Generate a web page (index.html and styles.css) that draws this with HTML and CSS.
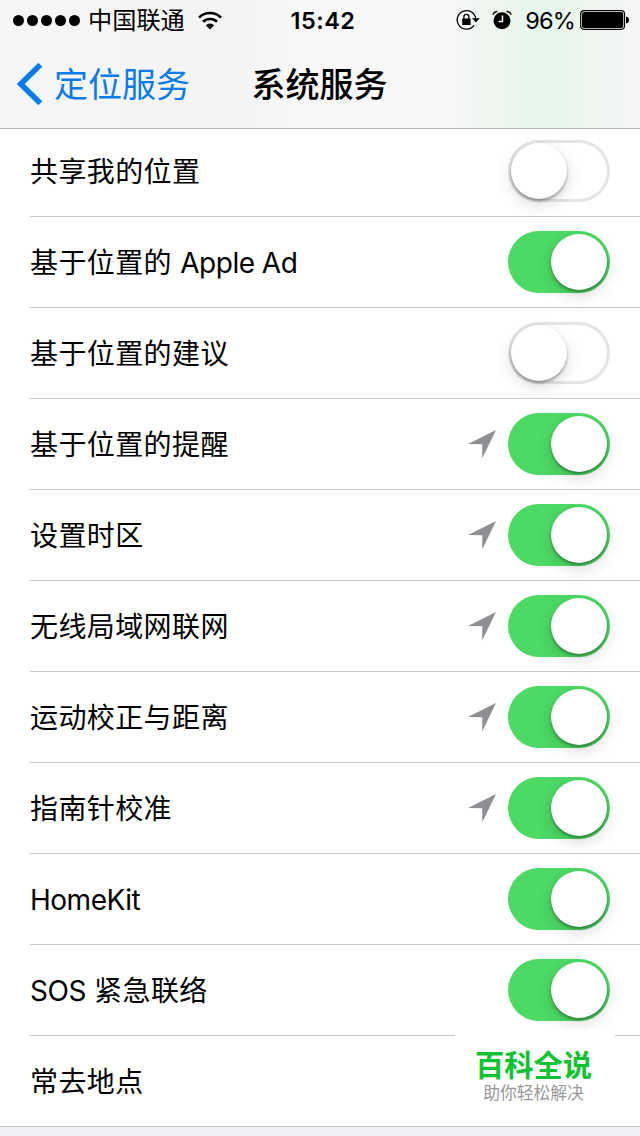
FILE: index.html
```html
<!doctype html>
<html lang="zh-CN">
<head>
<meta charset="utf-8">
<title>系统服务</title>
<meta name="viewport" content="width=device-width, initial-scale=1">
<link rel="stylesheet" href="styles.css">
</head>
<body>
<svg class="defs">
  <symbol id="arrow" viewBox="0 0 28 29">
    <path d="M28 0L14.3 28.3V14.2L0 14Z" fill="#8e8e93"/>
  </symbol>
</svg>
<header>
  <div class="status">
    <div class="status-left">
      <div class="signal"><i></i><i></i><i></i><i></i><i></i></div>
      <span class="carrier">中国联通</span>
      <svg class="wifi" width="24" height="19" viewBox="0 0 24 19">
        <g fill="none" stroke="#000" stroke-width="2.6">
          <path d="M1 6.6A15.6 15.6 0 0 1 23 6.6"/>
          <path d="M5 10.8A10 10 0 0 1 19 10.8"/>
        </g>
        <path d="M12 18.5L7.8 14.3A6 6 0 0 1 16.2 14.3Z"/>
      </svg>
    </div>
    <div class="time">15:42</div>
    <div class="status-right">
      <svg width="24" height="22" viewBox="0 0 24 22">
        <path d="M18 16.4A9.3 9.3 0 1 1 19.7 9.6" fill="none" stroke="#000" stroke-width="1.3"/>
        <path d="M16 9.2h7.8l-3.9 4.4z"/>
        <rect x="6.2" y="9.6" width="8.4" height="6.4" rx=".6"/>
        <path d="M7.9 10V7.8a2.5 2.5 0 0 1 5 0V10" fill="none" stroke="#000" stroke-width="1.3"/>
      </svg>
      <svg class="alarm" width="20" height="20" viewBox="0 0 20 20">
        <circle cx="10" cy="10.8" r="8.5"/>
        <path d="M10.5 5.6v5.8H6.6" fill="none" stroke="#fff" stroke-width="1.5"/>
        <path d="M.8 4.6Q2 1.8 5.4 1.2M19.2 4.6Q18 1.8 14.6 1.2" fill="none" stroke="#000" stroke-width="1.4"/>
      </svg>
      <span class="percent">96%</span>
      <svg class="battery" width="49" height="20" viewBox="0 0 49 20">
        <rect x=".7" y=".7" width="43.8" height="18.6" rx="3.2" fill="none" stroke="#000" stroke-width="1.2"/>
        <rect x="2" y="2" width="41.2" height="16" rx="2"/>
        <path d="M46 6.5q3 .5 3 3.5t-3 3.5z"/>
      </svg>
    </div>
  </div>
  <nav>
    <a class="back">
      <svg width="26" height="42" viewBox="0 0 26 42"><path d="M24.3 1.8L4.8 21L24.3 40.2" fill="none" stroke="#0b7bec" stroke-width="5.6"/></svg>
      <span>定位服务</span>
    </a>
    <h1>系统服务</h1>
  </nav>
</header>
<ul class="list">
  <li><div class="row"><span>共享我的位置</span><b class="switch"></b></div></li>
  <li><div class="row"><span>基于位置的 <em>Apple Ad</em></span><b class="switch on"></b></div></li>
  <li><div class="row"><span>基于位置的建议</span><b class="switch"></b></div></li>
  <li><div class="row"><span>基于位置的提醒</span><svg class="arrow"><use href="#arrow"/></svg><b class="switch on"></b></div></li>
  <li><div class="row"><span>设置时区</span><svg class="arrow"><use href="#arrow"/></svg><b class="switch on"></b></div></li>
  <li><div class="row"><span>无线局域网联网</span><svg class="arrow"><use href="#arrow"/></svg><b class="switch on"></b></div></li>
  <li><div class="row"><span>运动校正与距离</span><svg class="arrow"><use href="#arrow"/></svg><b class="switch on"></b></div></li>
  <li><div class="row"><span>指南针校准</span><svg class="arrow"><use href="#arrow"/></svg><b class="switch on"></b></div></li>
  <li><div class="row"><span><em>HomeKit</em></span><b class="switch on"></b></div></li>
  <li><div class="row"><span><em>SOS</em> 紧急联络</span><b class="switch on"></b></div></li>
  <li><div class="row"><span>常去地点</span></div></li>
</ul>
<div class="watermark">
  <strong>百科全说</strong>
  <small>助你轻松解决</small>
</div>
</body>
</html>
```
FILE: styles.css
```css
* {
  box-sizing: border-box;
}
body {
  margin: 0;
  height: 1136px;
  overflow: hidden;
  position: relative;
  background-color: #efeff4;
  color: #000;
  font-family: Inter, "Noto Sans CJK SC", sans-serif;
}
.defs {
  display: none;
}
header {
  position: relative;
  z-index: 1;
  height: 129px;
  border-bottom: 1px solid #b2b2b2;
  background-color: #f7f7f7;
  background-image: linear-gradient(90deg, #f6f6f6 0, #f4f4f4 240px, #f8f8f8 300px, #f8f8f8 445px, #f0f6f1 490px, #e7f6eb 530px, #e7f6eb 560px, #f0f6f1 590px, #f5f6f5 640px);
}
.status {
  height: 40px;
  display: grid;
  grid-template-columns: 1fr auto 1fr;
  align-items: center;
  padding: 0 11px 0 13px;
}
.status-left, .status-right {
  display: flex;
  align-items: center;
}
.status-right {
  justify-content: flex-end;
}
.signal {
  display: flex;
  gap: 3px;
}
.signal i {
  width: 11px;
  height: 11px;
  border-radius: 50%;
  background-color: #000;
}
.carrier {
  margin: 0 13px 0 8px;
  font-size: 24.2px;
  line-height: 38px;
  padding-top: 2px;
}
.time {
  padding: 1px 0 0 4px;
  font-size: 23.5px;
  font-weight: 600;
  letter-spacing: 0.5px;
}
.alarm {
  margin: 0 13px 0 12px;
}
.percent {
  padding-top: 1px;
  font-size: 23.5px;
  letter-spacing: -0.8px;
}
.battery {
  margin-left: 5px;
}
nav {
  height: 88px;
  display: grid;
  grid-template-columns: 1fr auto 1fr;
  align-items: center;
  padding: 0 17px 0 16px;
}
.back {
  display: flex;
  align-items: center;
  gap: 12px;
  color: #0b7bec;
  font-size: 34px;
  line-height: 48px;
}
.back span {
  padding-top: 2px;
}
h1 {
  margin: 0;
  padding-top: 2px;
  font-size: 34px;
  line-height: 48px;
  font-weight: 500;
}
.list {
  list-style: none;
  margin: -3px 0 0;
  padding: 0;
  background-color: #fff;
}
.list li {
  padding-left: 30px;
}
.list li:last-child {
  padding-left: 0;
}
.row {
  height: 91px;
  display: flex;
  align-items: center;
  padding-right: 30px;
  border-bottom: 1px solid #c8c7cc;
  font-size: 28px;
  letter-spacing: 0.4px;
}
.list li:last-child .row {
  padding-left: 30px;
}
.row span {
  flex: 1;
  padding-top: 2px;
  line-height: 40px;
}
.row em {
  font-style: normal;
  letter-spacing: -0.5px;
}
.arrow {
  width: 28px;
  height: 29px;
  margin-right: 12px;
}
.switch {
  width: 102px;
  height: 62px;
  padding: 3px;
  border-radius: 31px;
  background-color: #fff;
  box-shadow: inset 0 0 0 3px #e5e5e5;
}
.switch::before {
  content: "";
  display: block;
  width: 56px;
  height: 56px;
  border-radius: 50%;
  background-color: #fff;
  box-shadow: 0 2px 3px rgba(0, 0, 0, 0.35), 0 6px 16px rgba(0, 0, 0, 0.14);
}
.switch.on {
  background-color: #4cd964;
  box-shadow: none;
}
.switch.on::before {
  margin-left: 40px;
}
.watermark {
  position: absolute;
  left: 455px;
  top: 1030px;
  width: 160px;
  height: 82px;
  padding: 16px 3px 0 0;
  background-color: #fff;
  text-align: center;
}
.watermark strong {
  display: block;
  color: #0fc332;
  font-size: 29.3px;
  line-height: 40px;
}
.watermark small {
  display: block;
  color: #999;
  font-size: 16.8px;
  line-height: 15px;
}
```
